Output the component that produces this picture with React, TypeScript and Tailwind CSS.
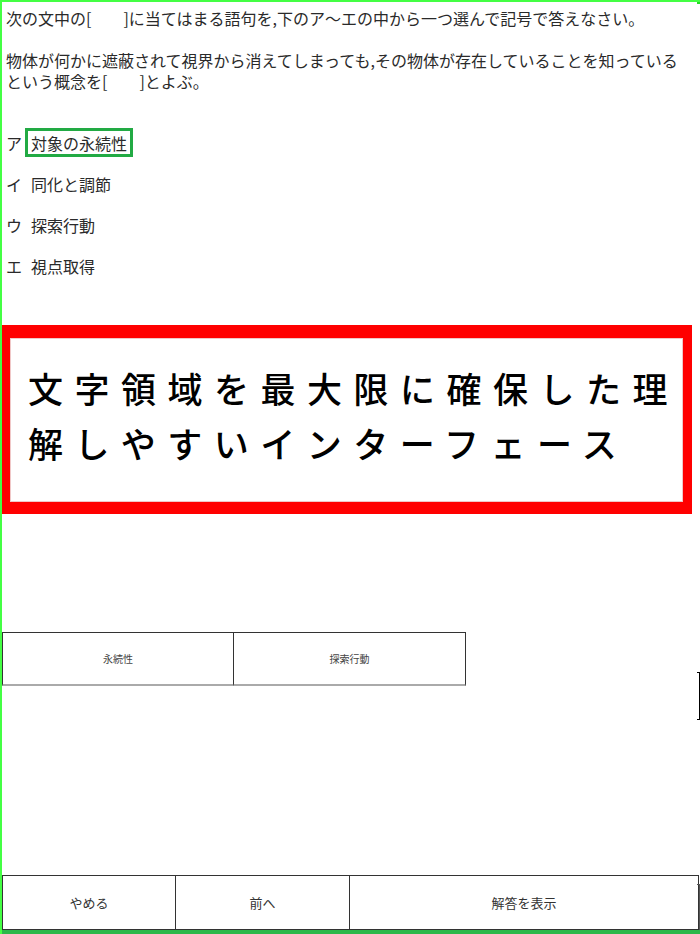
import React from "react"

const choices = [
  { mark: "ア", text: "対象の永続性", selected: true },
  { mark: "イ", text: "同化と調節", selected: false },
  { mark: "ウ", text: "探索行動", selected: false },
  { mark: "エ", text: "視点取得", selected: false },
]

export default function App() {
  return (
    <div
      className="relative flex h-[934px] w-[700px] flex-col overflow-hidden border-l-2 border-t-2 border-[#44ff44] bg-white text-[#2a2a2a]"
      style={{ fontFamily: '"Noto Sans CJK JP", "Noto Sans", sans-serif' }}
    >
      {/* corner tick */}
      <div className="absolute right-0 top-[-2px] h-[4px] w-[3px] bg-[#22dd22]" />

      {/* Question */}
      <div className="px-[4px] pt-[6px] text-[16px] leading-[21px]">
        <p>次の文中の[　　]に当てはまる語句を,下のア〜エの中から一つ選んで記号で答えなさい。</p>
        <p className="mt-[21px] pr-[8px]">
          物体が何かに遮蔽されて視界から消えてしまっても,その物体が存在していることを知っているという概念を[　　]とよぶ。
        </p>
      </div>

      {/* Choices */}
      <ul className="mt-[36px] flex flex-col gap-[12px] px-[4px] text-[16px]">
        {choices.map((c) => (
          <li key={c.mark} className="flex h-[29px] items-center">
            <span className="w-[19px]">{c.mark}</span>
            <span
              className={
                c.selected
                  ? "flex h-[29px] items-center border-[3px] border-[#22aa44] px-[3px]"
                  : "flex h-[29px] items-center border-[3px] border-transparent px-[3px]"
              }
            >
              {c.text}
            </span>
          </li>
        ))}
      </ul>

      {/* Banner */}
      <div className="mt-[45px] h-[189px] w-[690px] border-b-[12px] border-l-[8px] border-r-[9px] border-t-[13px] border-[#ff0000]">
        <div className="h-full border border-[#f0c8c8] pl-[17px] pt-[21px]">
          <p className="text-[35px] font-medium leading-[55px] text-black">
            <span className="block whitespace-nowrap tracking-[11.5px]">文字領域を最大限に確保した理</span>
            <span className="block whitespace-nowrap tracking-[11.5px]">解しやすいインターフェース</span>
          </p>
        </div>
      </div>

      {/* Answer candidates */}
      <div className="mt-[118px] flex">
        <button className="h-[54px] w-[232px] border border-b-2 border-[#333] border-b-[#aaa] text-[10px] text-[#444]">
          永続性
        </button>
        <button className="h-[54px] w-[232px] border border-b-2 border-l-0 border-[#333] border-b-[#aaa] text-[10px] text-[#444]">
          探索行動
        </button>
      </div>

      {/* stray bracket on right edge */}
      <div className="absolute left-[695px] top-[670px] h-[48px] w-[3px] border-y border-r border-black" />

      {/* Bottom nav */}
      <div className="relative mt-auto">
        <div className="flex h-[55px] w-[697px] text-[13px] text-[#333]">
          <button className="w-[174px] border border-[#333]">やめる</button>
          <button className="w-[174px] border border-l-0 border-[#333]">前へ</button>
          <button className="flex-1 border border-l-0 border-[#333]">解答を表示</button>
        </div>
        <div className="absolute right-0 top-[9px] h-[46px] w-[3px] border-r border-t border-[#555]" />
        <div className="h-[4px] bg-[#2cb84a]" />
      </div>
    </div>
  )
}
